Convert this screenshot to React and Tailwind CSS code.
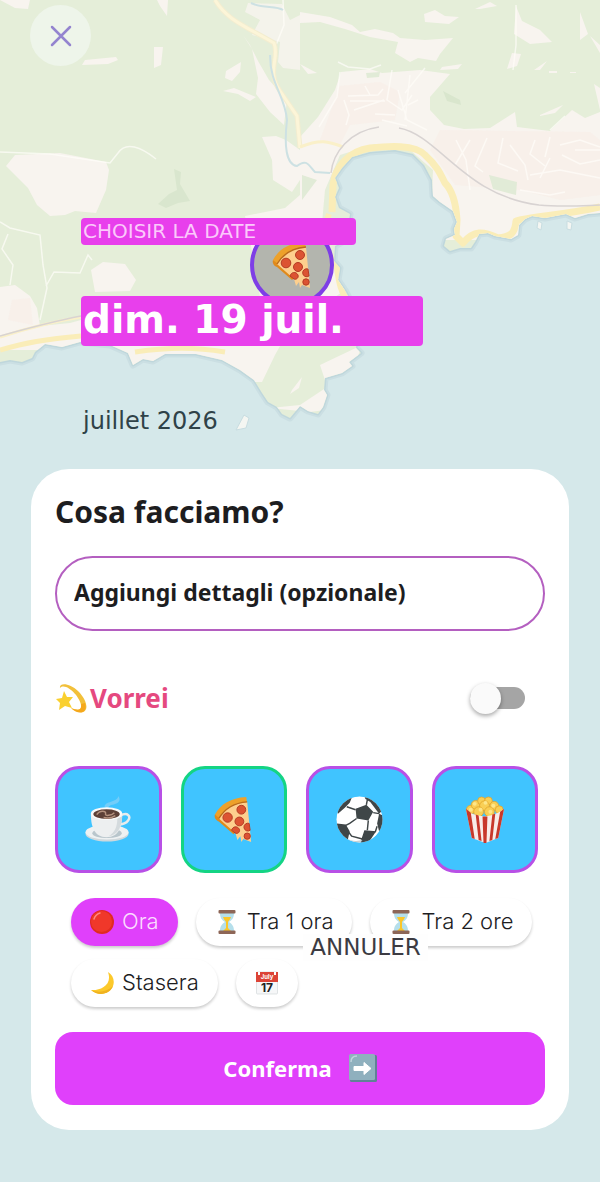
import { useState } from 'react';

function Pizza({ className }) {
  return (
    <svg viewBox="0 0 48 48" className={className} aria-hidden="true">
      <path d="M5 19C11 8 21 2 37 1l1 7C25 9 15 14 10 25z" fill="#eda12b" />
      <path d="M5 19c-1 3 1 6 4 7l15 13 3-3L10 23z" fill="#e08a1c" />
      <path d="M9 23C15 13 25 7 38 6l4 41-8-3-2 3-1-6-3 4-2-7z" fill="#fdcf8e" />
      <path d="M9 23C15 13 25 7 38 6" fill="none" stroke="#b96a1d" strokeWidth="1.4" />
      <circle cx="18" cy="22" r="4.800" fill="#dc5332" stroke="#b43c25" />
      <circle cx="32" cy="14" r="4.500" fill="#dc5332" stroke="#b43c25" />
      <circle cx="30" cy="26" r="4.500" fill="#dc5332" stroke="#b43c25" />
      <path d="M40 28a4 4 0 1 0 1 7zM22 35c1-4 6-5 8-1 1 3-2 5-4 4z" fill="#dc5332" stroke="#b43c25" />
      <circle cx="38" cy="41" r="3.200" fill="#dc5332" stroke="#b43c25" />
    </svg>
  );
}

function Coffee({ className }) {
  return (
    <svg viewBox="0 0 48 48" className={className} aria-hidden="true">
      <path d="M20 11c0-6 13-4 14-11 4 6-2 8-6 9s-4 2-4 4z" fill="#7fd0f8" opacity=".8" />
      <ellipse cx="22.500" cy="38.500" rx="22" ry="8" fill="#cfd8dc" />
      <ellipse cx="22.500" cy="37" rx="22" ry="7.500" fill="#eef1f2" />
      <ellipse cx="22.500" cy="38" rx="15" ry="5" fill="#b9c6cc" />
      <path d="M36 20c8-4 11 1 8 5-2 3-6 4-10 4" fill="none" stroke="#e8eced" strokeWidth="2.500" />
      <path d="M6 18c0 12 3 24 16 24s16-12 16-24z" fill="#edeff0" />
      <path d="M33 23c0 9-3 15-9 18 10-1 13-9 14-20z" fill="#d4dadd" />
      <ellipse cx="22" cy="18" rx="16" ry="6.500" fill="#fafafa" />
      <ellipse cx="22" cy="18.500" rx="13.500" ry="5" fill="#5d4037" />
      <path d="M12 19c3-5 10-4 9-1s6 2 9-1M19 22c4 1 9 0 12-2" fill="none" stroke="#b5927f" strokeWidth="1.500" />
    </svg>
  );
}

function Ball({ className }) {
  return (
    <svg viewBox="0 0 48 48" className={className} aria-hidden="true">
      <defs>
        <clipPath id="ball"><circle cx="24" cy="24" r="23.500" /></clipPath>
      </defs>
      <g clipPath="url(#ball)">
        <circle cx="24" cy="24" r="24" fill="#fff" />
        <path d="M20 13l11-4 7 7-5 9-12-2zM0 14L13 1l3 1-2 5-5 5-7 6zM29 0l9 3 9 12-3 3-9-12-5-3zM1 28l9 1 4 7-2 9L0 38zM26 44l3-9 12 1-8 12-8 1zM44 18l4 2v14l-4 2-2-8z" fill="#3f4648" />
        <path d="M11 11l9 3M31 9l1-5M38 17l6 1M33 25l-1 10M21 23l-7 5-4 2M13 37l3 4 11 3M42 31l-2 6" fill="none" stroke="#3f4648" strokeWidth="1.500" />
        <path d="M9 43c8 4 14 3 18 2l-3 4H10z" fill="#c7d0d3" />
      </g>
    </svg>
  );
}

function Popcorn({ className }) {
  return (
    <svg viewBox="0 0 48 48" className={className} aria-hidden="true">
      <g fill="#f9cf55" stroke="#e2a52d" strokeWidth=".8">
        <circle cx="10" cy="14" r="4.500" /><circle cx="15" cy="9" r="4.500" /><circle cx="21" cy="5" r="4" />
        <circle cx="28" cy="5" r="4" /><circle cx="34" cy="10" r="4.500" /><circle cx="39" cy="14" r="4" />
        <circle cx="24" cy="10" r="5" /><circle cx="18" cy="16" r="5" /><circle cx="29" cy="16" r="5" />
      </g>
      <g fill="#fde68a">
        <circle cx="14" cy="8" r="2" /><circle cx="25" cy="7" r="2" /><circle cx="33" cy="10" r="2" />
        <circle cx="20" cy="14" r="2" /><circle cx="30" cy="16" r="2" /><circle cx="10" cy="14" r="2" />
      </g>
      <path d="M5 13l6 5 7 2 6 1 6-1 8-3 6-4-6 30-13 5-14-5z" fill="#f8ece8" />
      <path d="M5 13l5 4 4 27-3-1zM15 19l3 1 3 26-3-1zM22 21h5l-1 27h-3zM32 19l3-1-3 27-3 1zM40 16l4-3-6 30-3 1z" fill="#c8382b" />
    </svg>
  );
}

function Dizzy({ className }) {
  return (
    <svg viewBox="0 0 32 32" className={className} aria-hidden="true">
      <path d="M5 6C4 0 15 1 23 9c9 9 11 19 5 21-4 1-9-1-12-4 8 3 11 2 10-3C25 15 11 0 5 6z" fill="#f2c03a" />
      <path d="M16 26c7 3 11 2 10-4l4-1c3 10-6 13-14 5z" fill="#f5a81c" />
      <path d="M9 9l3 6 6 0-4 5 3 6-7-2-6 4 1-7-4-4 6-1z" fill="#fad02f" />
    </svg>
  );
}

function RedDot({ className }) {
  return (
    <svg viewBox="0 0 24 24" className={className} aria-hidden="true">
      <circle cx="12" cy="12" r="12" fill="#e02b20" />
      <circle cx="11.500" cy="11.500" r="10.500" fill="#f0382a" />
      <path d="M4 9c1-3 3-5 6-6" fill="none" stroke="#ff8a80" strokeWidth="1.500" strokeLinecap="round" />
    </svg>
  );
}

function Hourglass({ className }) {
  return (
    <svg viewBox="0 0 24 24" className={className} aria-hidden="true">
      <path d="M5 3c0 5 2 7 5 9-3 2-5 4-5 9h14c0-5-2-7-5-9 3-2 5-4 5-9z" fill="#b5dfeb" />
      <path d="M8 7h8c-1 3-2 3-3 5v6l3 3H8l3-3v-6c-1-2-2-2-3-5z" fill="#fbc629" />
      <rect x="3.500" y="0" width="17" height="3.500" rx="1" fill="#8d6657" />
      <rect x="3.500" y="20.500" width="17" height="3.500" rx="1" fill="#8d6657" />
    </svg>
  );
}

function Moon({ className }) {
  return (
    <svg viewBox="0 0 24 24" className={className} aria-hidden="true">
      <path d="M18 1c5 3 7 9 5 14-3 8-14 11-22 4 8 1 22-4 17-18z" fill="#fcc92b" />
      <path d="M23 15c-3 8-14 11-22 4 7 3 16 2 22-4z" fill="#f0b21f" />
    </svg>
  );
}

function Calendar({ className }) {
  return (
    <svg viewBox="0 0 24 24" className={className} aria-hidden="true">
      <rect x="1.500" y="1" width="21" height="22" rx="1" fill="#f6f7f8" stroke="#d3d8da" strokeWidth=".7" />
      <path d="M1 1h22v10H1z" fill="#dc4437" />
      <path d="M3 1h2v3H3zM19 1h2v3h-2z" fill="#fff" />
      <text x="12" y="8" textAnchor="middle" fontSize="6" fontWeight="700" fill="#fff" fontFamily="Inter, sans-serif">July</text>
      <text x="12" y="21" textAnchor="middle" fontSize="12" fontWeight="700" fill="#202124" fontFamily="Inter, sans-serif">17</text>
    </svg>
  );
}

function ArrowBox({ className }) {
  return (
    <svg viewBox="0 0 28 28" className={className} aria-hidden="true">
      <rect x="1" y="1" width="27" height="27" rx="1.500" fill="#5f8296" />
      <rect x="0" y="0" width="26" height="26" rx="1.500" fill="#8fb0be" />
      <path d="M2 8c0-4 2-6 6-6" fill="none" stroke="#bfd3dc" strokeWidth="1.500" />
      <path d="M5 12.500h10V8.500l7 6-7 6v-4H5z" fill="#fff" stroke="#fff" strokeWidth="1" strokeLinejoin="round" />
    </svg>
  );
}

function CoastMap() {
  return (
    <svg
      viewBox="0 0 600 469"
      preserveAspectRatio="xMidYMin slice"
      className="absolute inset-0 w-full h-full"
      aria-hidden="true"
    >
      <defs>
        <path
          id="land"
          d="M0 0H600V213L588 214 575 218 566 214 545 218 532 216 525 219 519 225 518 235 511 239 495 236 488 233 479 234 475 242 471 248 460 248 450 251 444 246 446 239 455 235 454 229 457 222 453 211 440 202 433 196 432 180 424 165 413 154 395 150 370 152 352 157 342 168 335 178 339 188 335 197 339 208 350 214 346 240 335 246 334 261 340 268 338 280 346 292 360 320 356 348 361 353 349 362 352 366 342 373 325 378 324 390 327 395 323 407 318 414 308 411 300 406 290 418 282 414 277 407 268 402 262 393 254 380 240 370 222 360 196 354 165 354 153 361 143 359 133 365 128 353 110 345 80 342 62 347 45 344 35 352 32 358 22 362 10 360 0 362Z"
        />
        <clipPath id="landClip"><use href="#land" /></clipPath>
      </defs>
      <use href="#land" fill="none" stroke="#cbdfe3" strokeWidth="7" strokeLinejoin="round" />
      <use href="#land" fill="none" stroke="#bfd7dc" strokeWidth="3" strokeLinejoin="round" />
      <use href="#land" fill="#e5eed9" />
      <g clipPath="url(#landClip)">
        {/* towns and fields */}
        <g fill="#f8f4ef">
          <path d="M300 137L318 117 335 90 341 72 370 69 382 73 420 70 450 74 430 97 430 110 444 125 464 129 490 128 515 112 517 127 550 131 572 110 585 118 600 112V240H430L433 170 410 150 375 144 340 155 325 190 320 245 345 290 335 297H260L250 240 245 216 285 208 300 195Z" />
          <path d="M6 166L15 155 60 153 106 162 109 170 106 190 96 213 75 211 65 215 50 216 37 205 28 188Z" />
          <path d="M0 287L15 285 30 296 37 308 40 326 70 323 81 320V350H0Z" />
          <path d="M91 270L103 262 125 264 136 280 130 291 95 292Z" />
          <path d="M81 310H300L275 355 262 382 240 382 81 370Z" />
          <path d="M320 365L362 345 350 378 325 380ZM312 397L330 385 325 410 310 412 270 408 300 405Z" />
          <path d="M243 35L252 49 258 78 256 94 270 112 284 125 287 100 269 80 258 61 250 45ZM262 137L272 160 273 180 292 192 300 180V150L286 140 276 136ZM226 71L241 62 240 72 232 81 225 78ZM223 91L234 88 256 97 250 101 238 94ZM154 47H163L161 65 154 68ZM85 60L116 57 118 60 108 64 82 65ZM157 0H168L167 16 160 6ZM0 0H30L28 9 15 8Z" />
          <path d="M300 12L330 17 352 25 360 32 375 29 393 33 400 38 425 40 453 38 440 54 436 61 418 58 410 62 395 53 398 42 370 37 345 29 320 22 300 23ZM424 14L435 10 445 16 459 17 449 24 425 22ZM475 9L490 2 497 6 480 9ZM516 6L522 21 540 30 552 42 530 44 514 34ZM512 53L521 54 517 66 507 69ZM300 64L317 73 308 74ZM442 67L462 64 458 69 440 70ZM580 12L588 34 580 40ZM590 36L600 45V53ZM594 84L600 88V110ZM540 115L563 105 555 113 540 116ZM534 70L547 61 540 70ZM549 71h8v2h-8zM570 72h6v1h-6z" />
          <path d="M248 3L282 4 290 20 300 15V70L283 68 278 62 280 42 252 35 260 20 245 12Z" opacity=".8" />
        </g>
        <g fill="#f8eee8" opacity=".7">
          <path d="M340 86L380 82 400 92 395 120 350 125 340 145 320 140ZM440 130L590 132 600 140V195L560 200 520 190 455 185 430 150ZM12 300L30 298 33 325 8 320Z" />
        </g>
        <g fill="#d9e6ce">
          <path d="M174 169L181 172 180 184 190 201 178 203 166 208 158 204 169 194 177 190ZM443 91L460 100 461 105 447 101Z" />
        </g>
        <path d="M302 175l15 5-15 20zM366 73l14-1-1 5-12 1zM489 175l28 7-1 13-23-6z" fill="#e2ebd7" />
        <path d="M292 390L302 377 299 388 290 394Z" fill="#f8f4ef" />

        {/* streets */}
        <g fill="none" stroke="#fffdf9" strokeWidth="1.500" opacity=".7">
          <path d="M340 72l-3 25-18 30M344 100l5 15-3 10M348 96l30-1 5-6M350 101h35M354 110l30-10M382 120l25 6M392 70l-5 30 15 10 10-15M398 90l9 30 20 10M410 75l-5 45M425 68l-20 25M365 86l5 9M375 114l20 1M418 100l-10 5" />
          <path d="M470 140l-15 25M487 138l-12 28 8 6M503 138l-5 25 20 8M510 145l15 20 3 15M535 140l-5 14 15 12M550 137l-5 20M560 145l20-5 20 7M562 155l18 9 20-4M575 150h25M530 175l30-5 40 8M520 190l30 5 15-3M456 140l10 20 4 30M540 178l10-20" />
          <path d="M0 152l50 2 60 9 8-10c8-12 23-6 38 6M0 222l10 6 30 7 3 30 4 23-7 32M46 286l8-14 26 1 8-18 4 5M8 234l-6 15 11 16-3 20M283 0l1 25-8 20" />
          <path d="M338 62l10 5 22 2 11-4M516 5v40l-3 25M550 130l15-14" />
        </g>
        <g fill="none" stroke="#faf0c9">
          <path d="M215 0c12 20 30 26 59 43 6 15-8 28 6 48l17 25 3 32" stroke="#f3edd0" strokeWidth="5" />
          <path d="M215 0c12 20 30 26 59 43 6 15-8 28 6 48l17 25 3 32" stroke="#fcf5d8" strokeWidth="3" />
          <path d="M300 147c20-8 28-6 43 0" strokeWidth="3" />
          <path d="M332 212l1-27c2-18 16-34 37-37 18-2 45-4 55 7 12 11 15 18 20 28 8 8 11 20 12 37l-1 16 7 7c11-13 20-12 35-5 12-1 17-4 18-17 18-5 50-6 84-14" stroke="#faedb8" strokeWidth="7" strokeLinejoin="round" />
          <path d="M329 214c-8 20-4 35 8 54 2 15 4 25 12 35" stroke="#faedb8" strokeWidth="6" />
          <path d="M0 350c25-7 45-11 81-14M135 352c35-5 60-5 90 0" stroke="#faedb8" strokeWidth="5" />
          <path d="M0 337c25-8 50-15 81-20" strokeWidth="3" />
        </g>
        <path d="M331 173c2-20 18-42 48-46M399 128c40 7 65 68 140 77 22 2 35 1 61 0M0 336c25-7 55-15 81-20" fill="none" stroke="#d8d3d2" strokeWidth="1.500" />
      </g>
      <path d="M251 3c12 6 25 2 32 7M270 55c0 30 15 40 17 65-3 25-1 45 10 46 10-8 12 0 18 6l15 1" fill="none" stroke="#cde1e3" strokeWidth="2" />
      <path d="M244 415l5 3-3 10-10 2zM538 221l4 2-1 7-4-2zM567 221l5 2-1 7-4-1z" fill="#f4f6f2" stroke="#c8dde1" />
    </svg>
  );
}

const activities = [
  { name: 'Caffè', Icon: Coffee },
  { name: 'Pizza', Icon: Pizza },
  { name: 'Calcio', Icon: Ball },
  { name: 'Cinema', Icon: Popcorn },
];

const times = [
  { id: 'now', label: 'Ora', Icon: RedDot },
  { id: 'one', label: 'Tra 1 ora', Icon: Hourglass },
  { id: 'two', label: 'Tra 2 ore', Icon: Hourglass },
  { id: 'tonight', label: 'Stasera', Icon: Moon },
  { id: 'date', label: '', Icon: Calendar },
];

export default function App() {
  const [activity, setActivity] = useState('Pizza');
  const [time, setTime] = useState('now');
  const [wish, setWish] = useState(false);
  const [details, setDetails] = useState('');

  return (
    <div className="min-h-screen bg-[#d5e8ea] pb-[53px] font-['Noto_Sans',sans-serif] text-[#1d1d1f]">
      <header className="relative h-[469px] overflow-hidden pt-[5px] font-['DejaVu_Sans',sans-serif]">
        <CoastMap />
        <div className="absolute left-[250px] top-[223px] flex h-[84px] w-[84px] items-center justify-center rounded-full border-4 border-[#7e3ee6] bg-[#b3b5ae]">
          <Pizza className="h-[48px] w-[48px]" />
        </div>
        <button
          aria-label="Chiudi"
          className="relative ml-[30px] flex h-[61px] w-[61px] items-center justify-center rounded-full bg-[#eef5ea]"
        >
          <svg viewBox="0 0 22 22" className="h-[22px] w-[22px]" aria-hidden="true">
            <path d="M2 2l18 18M20 2L2 20" stroke="#9484cf" strokeWidth="2.500" strokeLinecap="round" />
          </svg>
        </button>
        <div className="relative ml-[81px] mt-[152px] flex flex-col items-start">
          <p className="h-[27px] w-[275px] rounded-[4px] bg-[#e83fec] pl-[2px] text-[20px] leading-[26px] text-[#fbc9fb]">
            CHOISIR LA DATE
          </p>
          <h1 className="mt-[51px] h-[50px] w-[342px] rounded-[4px] bg-[#e83fec] pl-[2px] text-[39px] font-bold leading-[48px] text-white">
            dim. 19 juil.
          </h1>
          <p className="mt-[59px] pl-[2px] text-[24px] leading-[32px] text-[#2f4248]">juillet 2026</p>
        </div>
      </header>

      <main className="relative mx-[31px] rounded-[38px] bg-white px-6 pb-[25px] pt-6">
        <h2 className="text-[30px] font-bold leading-[38px]">Cosa facciamo?</h2>
        <input
          type="text"
          aria-label="Dettagli"
          placeholder="Aggiungi dettagli (opzionale)"
          value={details}
          onChange={(e) => setDetails(e.target.value)}
          className="mt-[25px] h-[75px] w-full rounded-full border-2 border-[#b45fc0] px-[17px] pb-1 text-[23px] font-bold outline-none placeholder:text-[#1d1d1f]"
        />

        <label className="mt-[46px] flex h-[42px] items-center justify-between pr-5">
          <span className="flex items-center gap-[3px] text-[26px] font-bold text-[#e5497f]">
            <Dizzy className="h-[32px] w-[32px]" />
            Vorrei
          </span>
          <span className="relative flex h-8 w-[55px] items-center">
            <input
              type="checkbox"
              role="switch"
              checked={wish}
              onChange={() => setWish(!wish)}
              className="peer h-[22px] w-full appearance-none rounded-full bg-[#a5a5a5]"
            />
            <span className="pointer-events-none absolute left-0 h-[31px] w-[31px] rounded-full bg-[#fafafa] shadow-[0_2px_4px_rgba(0,0,0,0.35)] peer-checked:left-6" />
          </span>
        </label>

        <div className="mr-[7px] mt-[47px] grid grid-cols-4 gap-[19px]">
          {activities.map(({ name, Icon }) => (
            <button
              key={name}
              aria-label={name}
              onClick={() => setActivity(name)}
              className={`${activity === name ? 'border-[#14d484]' : 'border-[#b850e6]'}
                flex aspect-square items-center justify-center rounded-[24px] border-3 bg-[#40c4ff]`}
            >
              <Icon className="h-[47px] w-[47px]" />
            </button>
          ))}
        </div>

        <div className="ml-4 mt-[25px] flex flex-wrap gap-x-[18px] gap-y-[13px] font-['Inter',sans-serif]">
          {times.map(({ id, label, Icon }) => (
            <button
              key={id}
              aria-label={label || 'Scegli la data'}
              onClick={() => setTime(id)}
              className={`${time === id ? 'bg-[#e040fb] text-[#fbdcff]' : 'bg-white'}
                flex h-[48px] items-center gap-2 rounded-full px-[19px] text-[22px] font-light shadow-[0_2px_3px_rgba(0,0,0,0.2)]`}
            >
              <Icon className="h-6 w-6" />
              {label}
            </button>
          ))}
        </div>
        <button className="absolute left-[272px] top-[465px] h-[27px] w-[125px] bg-[#fefefe] font-['DejaVu_Sans',sans-serif] text-[23px] leading-[27px] text-[#3c3b42]">
          ANNULER
        </button>

        <button className="mt-[25px] flex h-[73px] w-full items-center justify-center gap-[17px] rounded-[18px] bg-[#e040fb] text-[22px] font-bold text-white">
          Conferma
          <ArrowBox className="h-7 w-7" />
        </button>
      </main>
    </div>
  );
}
